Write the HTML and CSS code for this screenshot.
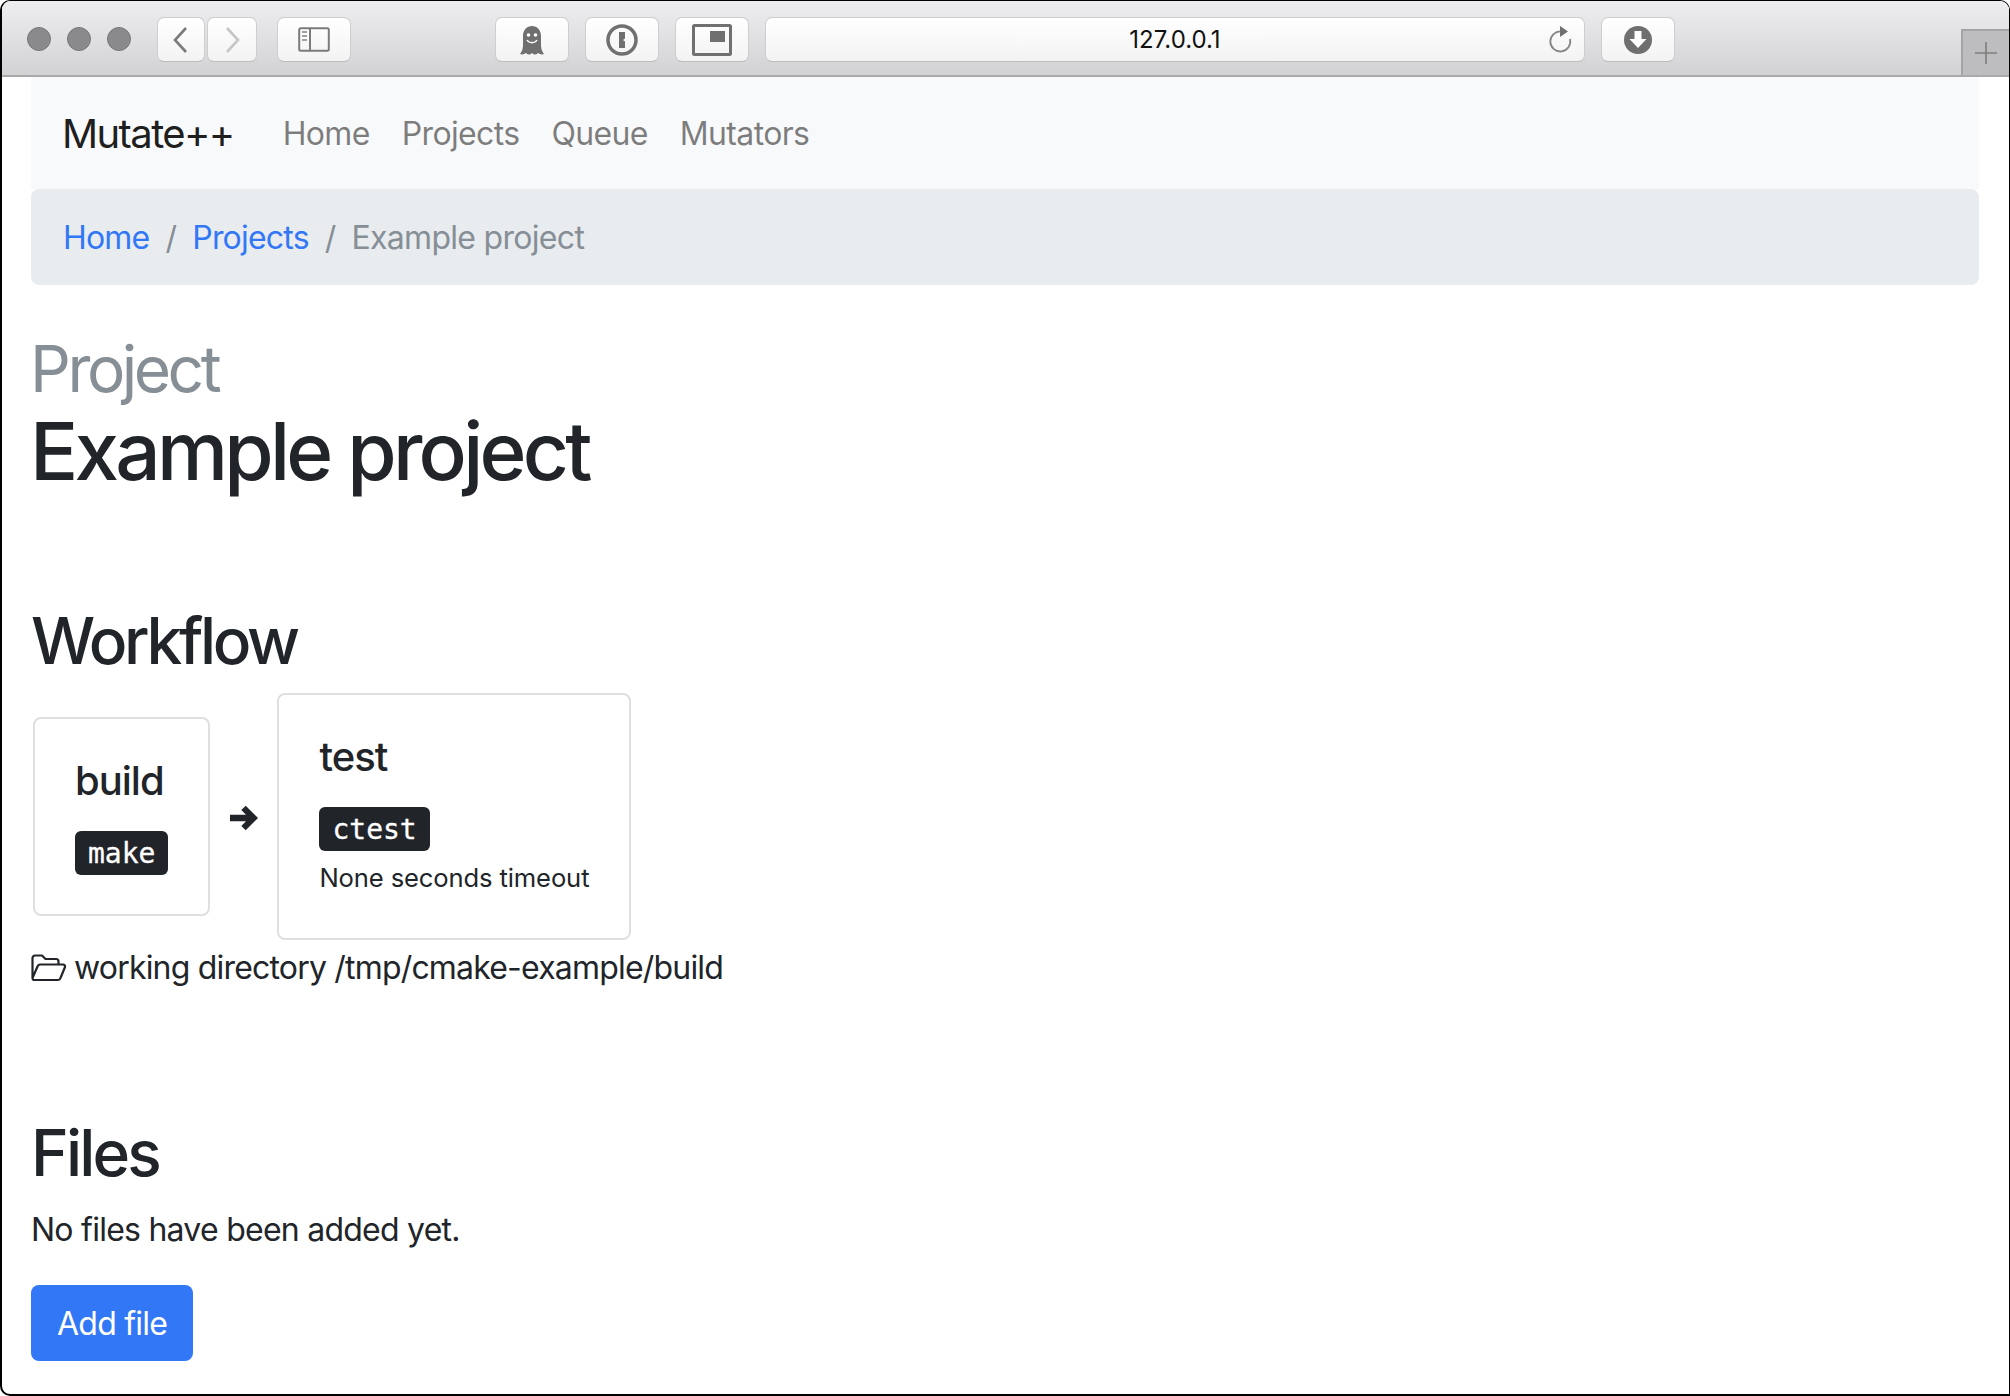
FILE: index.html
```html
<!DOCTYPE html>
<html lang="en">
<head>
<meta charset="utf-8">
<title>Mutate++</title>
<link rel="stylesheet" href="styles.css">
</head>
<body>
<div class="window">
  <header class="toolbar">
    <div class="lights"><span class="light"></span><span class="light"></span><span class="light"></span></div>
    <div class="nav-pair">
      <button class="tb tb-back"><svg width="20" height="28" viewBox="0 0 20 28"><path d="M15 2 L4 14 L15 26" fill="none" stroke="#7b7b7b" stroke-width="2.6"/></svg></button>
      <button class="tb tb-forward"><svg width="20" height="28" viewBox="0 0 20 28"><path d="M5 2 L16 14 L5 26" fill="none" stroke="#c6c6c6" stroke-width="2.6"/></svg></button>
    </div>
    <button class="tb tb-side"><svg width="32" height="26" viewBox="0 0 32 26"><rect x="1.2" y="1.2" width="29.600" height="22.600" rx="1.500" fill="none" stroke="#7b7b7b" stroke-width="2"/><path d="M12 1v23" stroke="#7b7b7b" stroke-width="2"/><path d="M4 5h5M4 9h5M4 13h5" stroke="#a0a0a0" stroke-width="2"/></svg></button>
    <button class="tb tb-ext tb-ghost"><svg width="26" height="30" viewBox="0 0 26 30"><path d="M1 29 C3 26 4 24 4 20 V11 C4 5 8 1 13 1 C18 1 22 5 22 11 V20 C22 24 23 26 25 29 C22 30 21 29 19 28 C17 30 15 30 13 28 C11 30 9 30 7 28 C5 29 4 30 1 29 Z" fill="#6f6f6f"/><circle cx="9.500" cy="10" r="1.800" fill="#fff"/><circle cx="16.500" cy="10" r="1.800" fill="#fff"/><path d="M8 15 C10 18.500 16 18.500 18 15" fill="none" stroke="#fff" stroke-width="1.500"/></svg></button>
    <button class="tb tb-ext"><svg width="32" height="32" viewBox="0 0 32 32"><circle cx="16" cy="16" r="14" fill="none" stroke="#707070" stroke-width="3.500"/><path d="M13 8h6v6.500l-2 1.500 2 1.500V24h-6z" fill="#707070"/></svg></button>
    <button class="tb tb-ext"><svg width="40" height="32" viewBox="0 0 40 32"><rect x="1.500" y="1.500" width="37" height="29" rx="1" fill="none" stroke="#707070" stroke-width="3"/><rect x="18" y="7" width="15" height="11" fill="#707070"/></svg></button>
    <div class="address">
      <span class="url">127.0.0.1</span>
      <svg class="reload" width="26" height="28" viewBox="0 0 26 28"><path d="M14 5.500 A10 10 0 1 0 23 13" fill="none" stroke="#858585" stroke-width="1.800"/><path d="M13 0 L21 5.500 L13 11 Z" fill="#6f6f6f"/></svg>
    </div>
    <button class="tb tb-ext"><svg width="28" height="28" viewBox="0 0 28 28"><circle cx="14" cy="14" r="14" fill="#6f6f6f"/><path d="M10.500 5h7v8h5L14 22 5.500 13h5z" fill="#fff"/></svg></button>
    <div class="newtab"><svg width="24" height="24" viewBox="0 0 24 24"><path d="M12 1v22M1 12h22" stroke="#7d7d7d" stroke-width="1.600"/></svg></div>
  </header>

  <main class="container">
    <nav class="navbar">
      <a class="brand">Mutate++</a>
      <a class="nav-link">Home</a>
      <a class="nav-link">Projects</a>
      <a class="nav-link">Queue</a>
      <a class="nav-link">Mutators</a>
    </nav>
    <ol class="breadcrumb">
      <li class="crumb-link">Home</li>
      <li class="crumb-sep">/</li>
      <li class="crumb-link">Projects</li>
      <li class="crumb-sep">/</li>
      <li class="crumb-active">Example project</li>
    </ol>

    <h1 class="title"><small class="title-small">Project</small><span class="title-main">Example project</span></h1>

    <h2 class="heading heading-workflow">Workflow</h2>
    <div class="workflow">
      <div class="card">
        <h5 class="card-title">build</h5>
        <kbd class="cmd">make</kbd>
      </div>
      <svg class="arrow" width="29" height="30" viewBox="0 0 30 30"><path d="M1 15 H25 M15 4.500 L25.500 15 L15 25.500" fill="none" stroke="#212529" stroke-width="6.500"/></svg>
      <div class="card">
        <h5 class="card-title">test</h5>
        <kbd class="cmd">ctest</kbd>
        <p class="timeout">None seconds timeout</p>
      </div>
    </div>
    <p class="workdir"><svg class="folder" width="36" height="28" viewBox="0 0 36 28"><path d="M1.500 24 V4 A2.500 2.500 0 0 1 4 1.500 H11 L14.500 5 H25 A2.500 2.500 0 0 1 27.500 7.500 V10.500 M1.500 24 L6.500 12.500 A3 3 0 0 1 9 10.500 H32 A2 2 0 0 1 34 13 L29.500 24 A3 3 0 0 1 27 26 H3.500 A2 2 0 0 1 1.500 24 Z" fill="none" stroke="#212529" stroke-width="2.200" stroke-linejoin="round"/></svg>working directory /tmp/cmake-example/build</p>

    <h2 class="heading heading-files">Files</h2>
    <p class="nofiles">No files have been added yet.</p>
    <a class="btn">Add file</a>
  </main>
</div>
</body>
</html>
```

FILE: styles.css
```css
* { box-sizing: border-box; }
html, body { margin: 0; padding: 0; background: #fff; }
body {
  width: 2010px;
  height: 1396px;
  overflow: hidden;
  font-family: Inter, "Liberation Sans", sans-serif;
  color: #212529;
  font-size: 32px;
  line-height: 48px;
  letter-spacing: -0.75px;
}
.window {
  width: 2010px;
  height: 1396px;
  background: #fff;
  border: solid #000;
  border-width: 1px 1px 2px 2px;
  border-radius: 10px 10px 0 10px;
  overflow: hidden;
  position: relative;
}
.toolbar {
  height: 76px;
  display: flex;
  align-items: flex-start;
  padding-top: 16px;
  background: linear-gradient(#eeedef, #d2d1d3);
  border-bottom: 2px solid #aaa8aa;
  position: relative;
}
.lights { display: flex; gap: 16px; margin: 10px 0 0 25px; }
.light {
  width: 24px;
  height: 24px;
  border-radius: 50%;
  background: #8a8a8c;
  border: 1px solid #777779;
}
.tb {
  height: 45px;
  padding: 0;
  display: flex;
  align-items: center;
  justify-content: center;
  background: linear-gradient(#fff, #f3f3f3);
  border: 1px solid #cfcdcf;
  border-bottom-color: #bdbbbd;
  border-radius: 7px;
}
.nav-pair { display: flex; gap: 2px; margin-left: 26px; }
.tb-back { width: 48px; }
.tb-forward { width: 50px; }
.tb-side { width: 74px; margin-left: 20px; }
.tb-ext { width: 74px; margin-left: 16px; }
.tb-ghost { margin-left: 144px; }
.address {
  width: 820px;
  height: 45px;
  margin-left: 16px;
  display: flex;
  align-items: center;
  justify-content: center;
  position: relative;
  background: linear-gradient(#fff, #f3f3f3);
  border: 1px solid #cfcdcf;
  border-bottom-color: #bdbbbd;
  border-radius: 7px;
}
.url { font-size: 24px; line-height: 30px; color: #111; letter-spacing: 0; }
.reload { position: absolute; right: 11px; top: 8px; }
.newtab {
  position: absolute;
  right: 0;
  top: 28px;
  width: 48px;
  height: 46px;
  display: flex;
  align-items: center;
  justify-content: center;
  background: #bdbcbe;
  border: solid #a4a3a5;
  border-width: 2px 0 0 2px;
}
.container { padding: 0 30px 0 29px; }
.navbar {
  height: 112px;
  display: flex;
  align-items: center;
  padding: 2px 31px 0;
  background: #f8f9fa;
}
.brand { font-size: 40px; letter-spacing: -1.6px; color: rgba(0,0,0,.9); margin-right: 33px; }
.nav-link { color: rgba(0,0,0,.5); padding: 0 16px; letter-spacing: -0.65px; }
.breadcrumb {
  height: 96px;
  margin: 0;
  padding: 2px 32px 0;
  list-style: none;
  display: flex;
  align-items: center;
  background: #e9ecef;
  border-radius: 8px;
}
.crumb-link { color: #3278f6; letter-spacing: -0.8px; }
.crumb-sep { color: #868e96; padding: 0 16px; }
.crumb-active { color: #868e96; letter-spacing: -0.7px; }
.title { margin: 48px 0 0 -1px; font-weight: 500; }
.title-small { display: block; font-size: 64px; line-height: 72px; font-weight: 400; color: #868e96; letter-spacing: -3.5px; }
.title-main { display: block; font-size: 80px; line-height: 92px; font-weight: 500; letter-spacing: -3.75px; }
.heading { margin: 0; font-size: 64px; line-height: 76px; font-weight: 500; letter-spacing: -2.8px; }
.heading-workflow { margin-top: 106px; letter-spacing: -3.3px; }
.workflow { display: flex; align-items: center; margin: 14px 0 0 2px; }
.card {
  background: #fff;
  border: 2px solid #dfdfdf;
  border-radius: 8px;
  padding: 38px 40px 39px;
}
.card-title { margin: 0 0 26px; font-size: 40px; line-height: 48px; font-weight: 500; letter-spacing: -1px; }
.cmd {
  display: block;
  width: fit-content;
  padding: 0 13px;
  height: 44px;
  font-family: "DejaVu Sans Mono", monospace;
  font-size: 28px;
  line-height: 46px;
  letter-spacing: 0;
  color: #fff;
  background: #212529;
  border-radius: 6px;
  -webkit-text-stroke: 0.3px #fff;
}
.arrow { margin: 2px 19px 0; }
.timeout { margin: 8px 0 2px; font-size: 25.600px; line-height: 38px; letter-spacing: -0.13px; }
.workdir { margin: 4px 0 0; display: flex; align-items: center; letter-spacing: -0.81px; }
.folder { margin-right: 7px; }
.nofiles { margin: 15px 0 0; }
.heading-files { margin-top: 123px; }
.btn {
  display: inline-block;
  margin-top: 31px;
  padding: 15px 26px 13px;
  color: #fff;
  background: #3278f6;
  border-radius: 8px;
}
```
